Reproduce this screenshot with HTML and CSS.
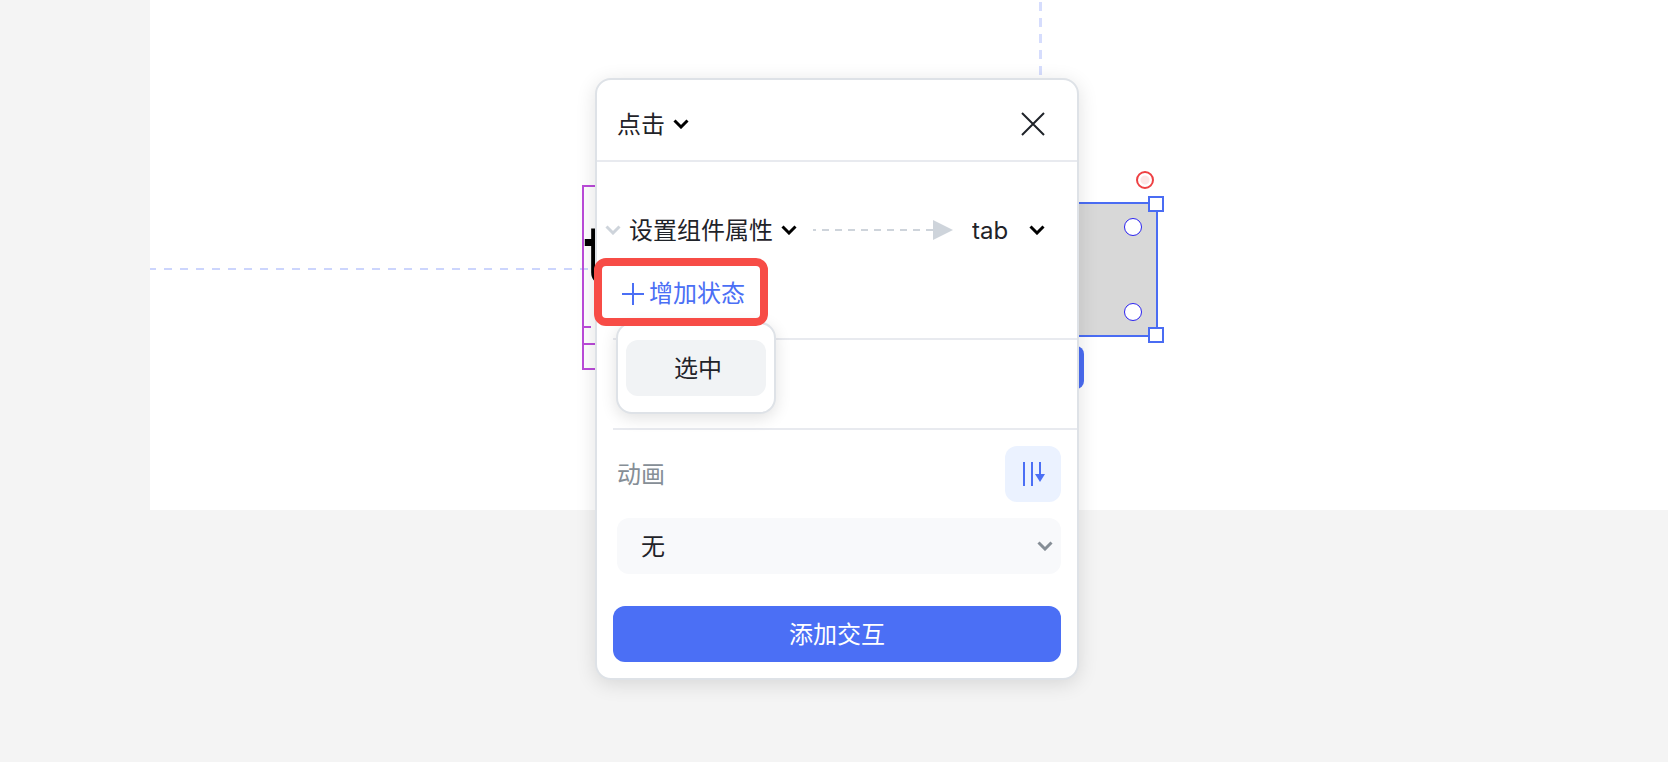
FILE: index.html
```
<!doctype html>
<html lang="zh-CN">
<head>
<meta charset="utf-8">
<title>交互</title>
<link rel="stylesheet" href="styles.css">
</head>
<body>

<!-- canvas -->

<main class="artboard">
	<div class="guide guide-h"></div>
	<div class="guide guide-v"></div>

	<div class="text-shape">
		<span class="text-shape-label">t</span>
		<span class="text-shape-mark"></span>
		<span class="text-shape-line"></span>
	</div>

	<div class="size-tag"></div>
	<div class="shape">
		<span class="handle handle-top"></span>
		<span class="handle handle-bottom"></span>
		<span class="corner corner-top"></span>
		<span class="corner corner-bottom"></span>
		<span class="rotate"></span>
	</div>
</main>


<!-- interaction panel -->

<form class="panel">
	<header class="panel-header">
		<span class="pick">
			<select aria-label="触发方式"><option>点击</option></select>
			<svg class="chevron" viewBox="0 0 16 10"><path d="M1.500 1.500 8 8l6.500-6.500"/></svg>
		</span>
		<button type="button" class="close" aria-label="关闭">
			<svg width="24" height="24" viewBox="0 0 24 24"><path d="M1 1l22 22M23 1L1 23"/></svg>
		</button>
	</header>

	<div class="action">
		<button type="button" class="fold" aria-label="收起">
			<svg class="chevron" viewBox="0 0 16 10"><path d="M1.500 1.500 8 8l6.500-6.500"/></svg>
		</button>
		<span class="pick">
			<select aria-label="动作"><option>设置组件属性</option></select>
			<svg class="chevron" viewBox="0 0 16 10"><path d="M1.500 1.500 8 8l6.500-6.500"/></svg>
		</span>
		<svg class="arrow" width="140" height="20" viewBox="0 0 140 20">
			<path class="arrow-line" d="M0 10h120"/>
			<path class="arrow-head" d="M120 0l20 10-20 10z"/>
		</svg>
		<span class="pick pick-target">
			<select aria-label="目标"><option>tab</option></select>
			<svg class="chevron" viewBox="0 0 16 10"><path d="M1.500 1.500 8 8l6.500-6.500"/></svg>
		</span>
	</div>

	<div class="states">
		<button type="button" class="add-state">
			<svg width="22" height="22" viewBox="0 0 22 22"><path d="M11 0v22M0 11h22"/></svg>
			增加状态
		</button>
		<div class="menu">
			<button type="button" class="menu-item">选中</button>
		</div>
		<div class="highlight"></div>
	</div>

	<div class="blank"></div>

	<section class="animation">
		<div class="animation-head">
			<label for="animation">动画</label>
			<button type="button" class="order" aria-label="依次执行">
				<svg width="24" height="24" viewBox="0 0 24 24">
					<path d="M3 0v24M11 0v24M19 0v14"/>
					<path class="order-head" d="M14 12h10l-5 8z"/>
				</svg>
			</button>
		</div>
		<div class="field">
			<select id="animation"><option>无</option></select>
			<svg class="chevron" viewBox="0 0 16 10"><path d="M1.500 1.500 8 8l6.500-6.500"/></svg>
		</div>
		<button type="submit" class="submit">添加交互</button>
	</section>
</form>

</body>
</html>
```
FILE: styles.css
```
* {
	box-sizing: border-box;
}

body {
	margin: 0;
	padding-left: 150px;
	background: #f4f4f4;
	color: #1f2329;
	font-family: Inter, "Noto Sans CJK SC", sans-serif;
	font-size: 24px;
	line-height: 32px;
}

button,
select {
	margin: 0;
	padding: 0;
	border: 0;
	background: none;
	color: inherit;
	font: inherit;
}

select {
	appearance: none;
}

svg {
	display: block;
	fill: none;
	stroke: currentColor;
	stroke-width: 2;
}

.chevron {
	width: 16px;
	height: 10px;
	stroke-width: 3;
}


/* ====  Canvas  ==== */

.artboard {
	position: relative;
	height: 510px;
	overflow: hidden;
	background: white;
}

.guide {
	position: absolute;
}

.guide-h {
	top: 268px;
	left: -2px;
	width: 460px;
	height: 2px;
	background: repeating-linear-gradient(to right, #ccd5fd 0 8px, transparent 8px 16px);
}

.guide-v {
	top: -14px;
	left: 889px;
	width: 3px;
	height: 110px;
	background: repeating-linear-gradient(to bottom, #d6ddfd 0 9px, transparent 9px 16px);
}

.text-shape {
	position: absolute;
	top: 185px;
	left: 432px;
	width: 200px;
	height: 185px;
	border: 2px solid #bb4bd9;
}

.text-shape-label {
	position: absolute;
	top: 19px;
	left: 0;
	color: black;
	font-size: 80px;
	font-weight: 500;
	line-height: 96px;
}

.text-shape-mark,
.text-shape-line {
	position: absolute;
	left: 0;
	height: 2px;
	background: #bb4bd9;
}

.text-shape-mark {
	top: 139px;
	width: 7px;
}

.text-shape-line {
	top: 156px;
	width: 100%;
}

.shape {
	position: absolute;
	top: 202px;
	left: 808px;
	width: 200px;
	height: 135px;
	border: 2px solid #4a6cf3;
	background: #d8d8d8;
}

.handle,
.corner,
.rotate {
	position: absolute;
	background: white;
}

.handle {
	right: -8px;
	width: 16px;
	height: 16px;
	border: 2px solid #4a6cf3;
}

.handle-top {
	top: -8px;
}

.handle-bottom {
	bottom: -8px;
}

.corner {
	right: 14px;
	width: 18px;
	height: 18px;
	border: 1px solid #2a22f0;
	border-radius: 50%;
}

.corner-top {
	top: 14px;
}

.corner-bottom {
	bottom: 14px;
}

.rotate {
	top: -33px;
	right: 2px;
	width: 18px;
	height: 18px;
	border: 2px solid #ee4043;
	border-radius: 50%;
	background: radial-gradient(#fde6e6 4px, white 5px);
}

.size-tag {
	position: absolute;
	top: 346px;
	left: 840px;
	width: 94px;
	height: 43px;
	border-radius: 8px;
	background: #4a6cf3;
}


/* ====  Panel  ==== */

.panel {
	position: absolute;
	top: 78px;
	left: 595px;
	width: 484px;
	border: 2px solid #dee2e7;
	border-radius: 16px;
	background: white;
	box-shadow: 0 4px 20px rgba(0, 0, 0, .12);
}

.panel-header {
	display: flex;
	align-items: center;
	justify-content: space-between;
	height: 82px;
	padding: 8px 32px 0 20px;
	border-bottom: 2px solid #e8eaef;
}

.pick {
	display: flex;
	align-items: center;
	position: relative;
}

.pick select {
	padding: 2px 24px 0 0;
}

.pick .chevron {
	position: absolute;
	right: 0;
	color: black;
	pointer-events: none;
}

.action {
	display: flex;
	align-items: center;
	height: 56px;
	margin-top: 40px;
	padding: 0 32px 0 8px;
}

.fold {
	margin-right: 8px;
	color: #ced4db;
}

.arrow {
	margin-left: 16px;
	stroke: none;
}

.arrow-line {
	stroke: #ced4db;
	stroke-dasharray: 7 6;
	stroke-dashoffset: 4;
}

.arrow-head {
	fill: #ced4db;
}

.pick-target {
	flex: 1;
	margin-left: 19px;
}

.pick-target select {
	flex: 1;
}

.states {
	position: relative;
	height: 76px;
	padding-left: 25px;
	margin-bottom: 4px;
}

.add-state {
	display: flex;
	align-items: center;
	gap: 5px;
	height: 72px;
	color: #4b6ff5;
}

.menu {
	position: absolute;
	top: 64px;
	left: 19px;
	width: 160px;
	padding: 16px 8px;
	border: 2px solid #dee2e7;
	border-radius: 16px;
	background: white;
	box-shadow: 0 4px 16px rgba(0, 0, 0, .12);
}

.menu-item {
	display: block;
	width: 100%;
	height: 56px;
	padding: 2px 0 0 4px;
	border-radius: 12px;
	background: #f1f3f5;
}

.highlight {
	position: absolute;
	top: 0;
	left: -3px;
	width: 174px;
	height: 68px;
	border: 8px solid #f74c46;
	border-radius: 12px;
	pointer-events: none;
}

.blank {
	height: 92px;
	margin-left: 16px;
	border: solid #e8eaef;
	border-width: 2px 0;
}

.animation {
	padding: 16px;
}

.animation-head {
	display: flex;
	align-items: center;
	justify-content: space-between;
	padding-left: 4px;
	color: #868e96;
}

.animation-head label {
	padding-top: 2px;
}

.order {
	display: flex;
	align-items: center;
	justify-content: center;
	width: 56px;
	height: 56px;
	border-radius: 12px;
	background: #ebf2ff;
	color: #4b6ff5;
}

.order-head {
	fill: currentColor;
	stroke: none;
}

.field {
	display: flex;
	align-items: center;
	position: relative;
	margin: 16px 0 32px 4px;
}

.field select {
	width: 100%;
	height: 56px;
	padding: 2px 24px 0;
	border-radius: 12px;
	background: #f8f9fb;
}

.field .chevron {
	position: absolute;
	right: 8px;
	color: #868e96;
	pointer-events: none;
}

.submit {
	width: 100%;
	height: 56px;
	padding-top: 2px;
	border-radius: 12px;
	background: #4b6ff5;
	color: white;
}
```
